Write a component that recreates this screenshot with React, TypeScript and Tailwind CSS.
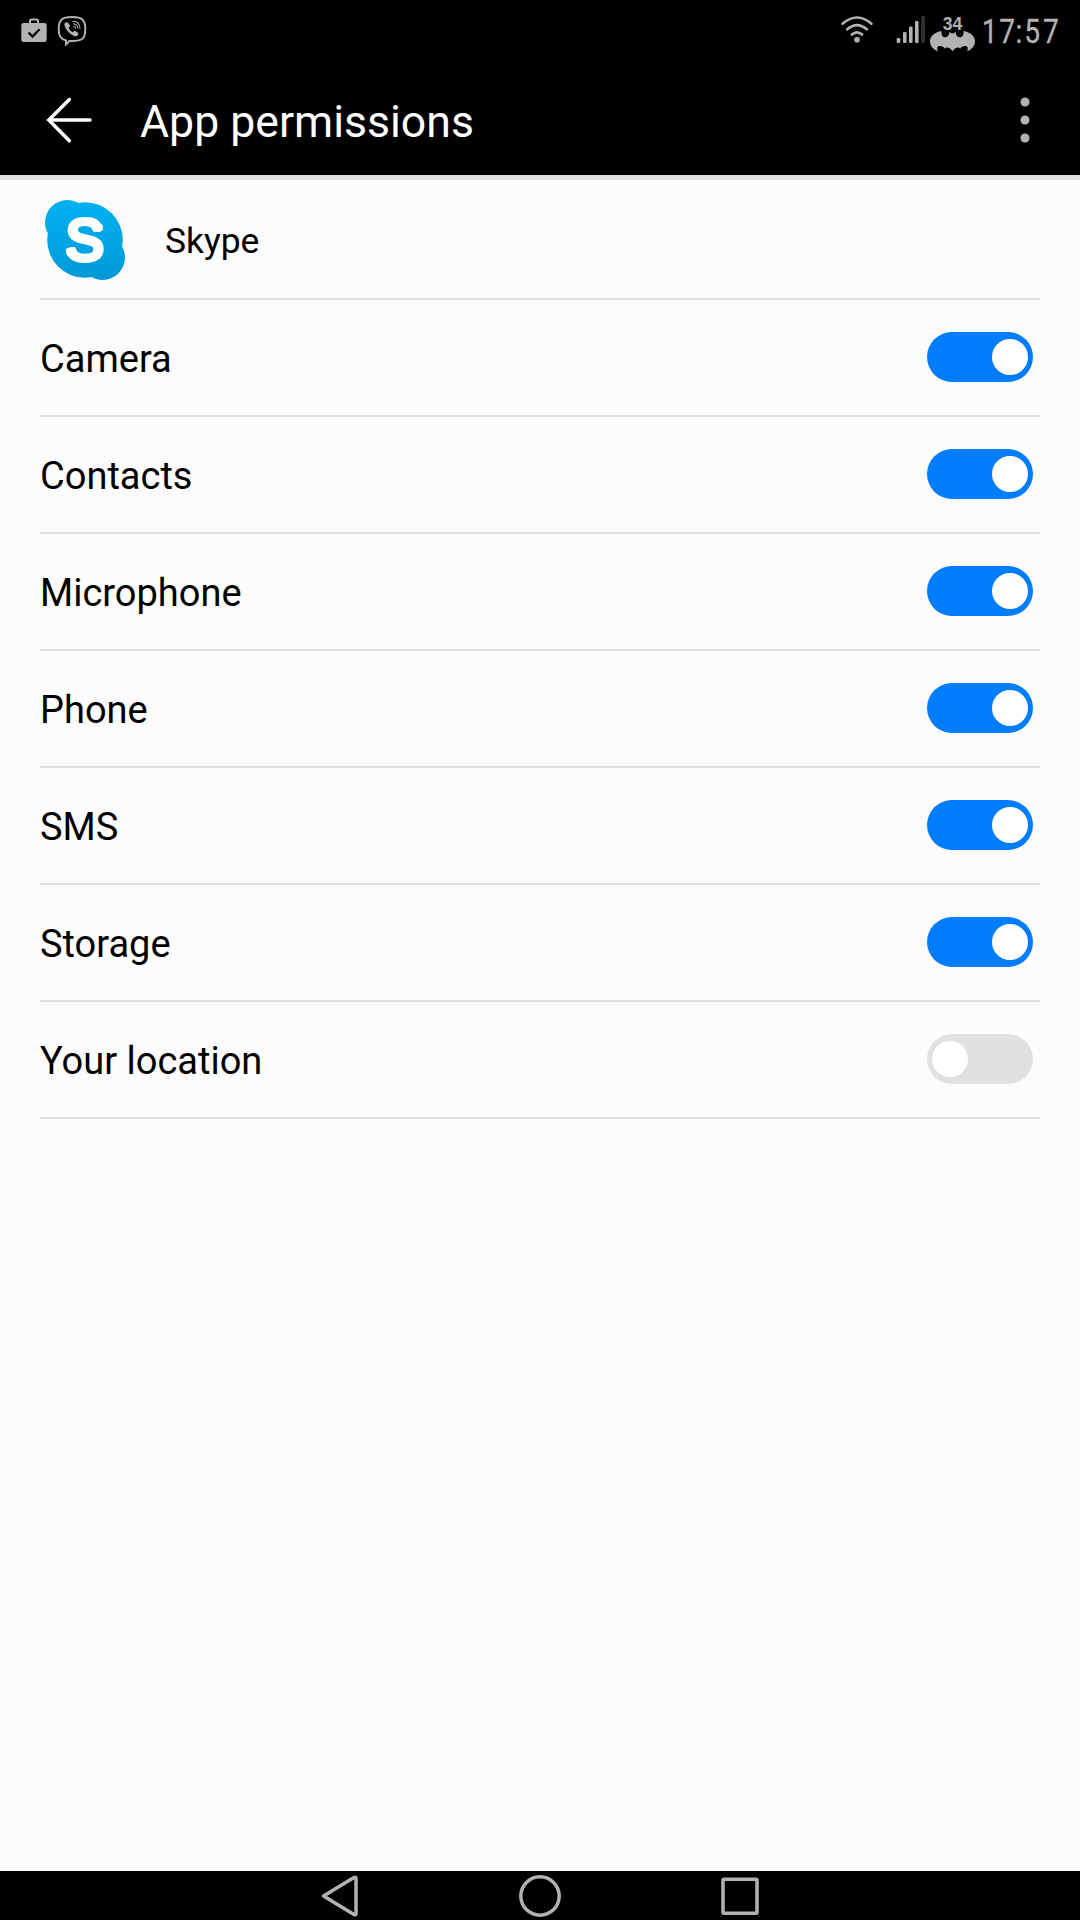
import { useState } from "react";

const permissions = [
  { name: "Camera", granted: true },
  { name: "Contacts", granted: true },
  { name: "Microphone", granted: true },
  { name: "Phone", granted: true },
  { name: "SMS", granted: true },
  { name: "Storage", granted: true },
  { name: "Your location", granted: false },
];

function StatusBar() {
  return (
    <div className="flex h-[60px] items-start justify-between text-[#b2b2b2]">
      <svg width="100" height="60" viewBox="0 0 100 60" fill="none">
        <path d="M30 23v-2.2q0-1.3 1.3-1.3h5.4q1.3 0 1.3 1.3V23" stroke="currentColor" strokeWidth="2" />
        <rect x="21.3" y="23" width="25.4" height="19" rx="2.2" fill="currentColor" />
        <path d="M28.5 32.5l4 4 7-7.3" stroke="#000" strokeWidth="2.3" />
        <path
          d="M72 17c10 0 13.3 2.5 13.3 12.2S82 41 72 41h-2.5L66 44.5V40.5C60.5 39 58.7 36 58.7 29.2 58.7 19.5 62 17 72 17z"
          stroke="currentColor"
          strokeWidth="1.9"
        />
        <path
          d="M66.5 22.3c-1.5 0-2.6 1.6-2 3.2 1.6 4.8 5 8.5 9.8 10.5 1.8.8 3.7-.2 4-1.8.2-.9-.2-1.4-.9-1.9l-2-1.3c-.7-.4-1.3-.2-1.8.5l-.6.7c-2.2-.8-3.6-2.3-4.3-4.5l.8-.7c.7-.6.7-1.1.3-1.8l-1.6-2.3c-.5-.5-1-.7-1.7-.6z"
          fill="currentColor"
        />
        <path
          d="M72.5 21.2c4.7.1 7.5 3 7.5 7.5M73 23.7c3.1.2 4.8 1.9 4.9 4.9M73.3 26.2c1.5.1 2.2.9 2.4 2.3"
          stroke="currentColor"
          strokeWidth="1.1"
        />
      </svg>

      <svg width="240" height="60" viewBox="840 0 240 60" fill="none">
        <g stroke="currentColor" strokeWidth="2.6" strokeLinecap="round">
          <path d="M842.5 23.7q14.5-12.4 29 0" />
          <path d="M847.2 29.3q9.8-8.4 19.6 0" />
          <path d="M851.8 34.5q5.2-4.4 10.4 0" />
        </g>
        <circle cx="857" cy="39.8" r="2.8" fill="currentColor" />
        <g fill="currentColor">
          <rect x="896.7" y="38" width="3.6" height="5" rx="1.2" />
          <rect x="903" y="32" width="3.6" height="11" rx="1.2" />
          <rect x="909" y="26.5" width="3.6" height="16.5" rx="1.2" />
          <rect x="915" y="21" width="3.6" height="22" rx="1.2" />
          <rect x="921.3" y="16" width="3.6" height="27" rx="1.2" fill="#333" />
          <text
            x="942.7"
            y="29.8"
            fontSize="19"
            textLength="19.4"
            lengthAdjust="spacingAndGlyphs"
            className="font-['Liberation_Sans'] font-bold"
          >
            34
          </text>
          <path d="M941.5 31C934.5 32.3 930 36.3 930 41.2c0 4.3 2.6 7.9 7.8 10-1.2-3.4-.3-5.2 2.2-5.2 2.300 0 4 .8 4.800 2.700 1.600-2.300 5.500-1.200 7.700 2.600 2.200-3.800 6.100-4.900 7.700-2.600.8-1.900 2.500-2.700 4.800-2.700 2.500 0 3.400 1.800 2.200 5.200 5.200-2.100 7.800-5.700 7.800-10 0-4.900-4.500-8.900-11.500-10.200.3 4-1 6.300-3.500 6.300-2.500 0-4-1.800-4.500-5.600l-1.700 1.600h-2.600l-1.700-1.600c-.5 3.800-2 5.600-4.500 5.600-2.500 0-3.800-2.300-3.500-6.300z" />
          {/* condensed clock digits */}
          <text
            transform="scale(0.85 1)"
            x="1155 1175.6 1194.7 1205 1227"
            y="43"
            fontSize="33"
            stroke="currentColor"
            strokeWidth="0.3"
            className="font-[Roboto]"
          >
            17:57
          </text>
        </g>
      </svg>
    </div>
  );
}

function SkypeLogo() {
  return (
    <svg width="80" height="80" viewBox="0 0 80 80" className="mt-[2px]">
      <defs>
        <linearGradient id="sky" x1="0" y1="0" x2="0" y2="80" gradientUnits="userSpaceOnUse">
          <stop offset="0.1" stopColor="#00aff0" />
          <stop offset="1" stopColor="#0099d6" />
        </linearGradient>
      </defs>
      <g fill="url(#sky)">
        <circle cx="40" cy="40" r="37.8" />
        <circle cx="22.5" cy="22.5" r="22.5" />
        <circle cx="57.5" cy="57.5" r="22.5" />
      </g>
      <text
        x="39.8"
        y="60"
        fontSize="57"
        textAnchor="middle"
        fill="#fff"
        stroke="#fff"
        strokeWidth="5"
        strokeLinejoin="round"
        className="font-['Liberation_Sans']"
      >
        S
      </text>
      <g fill="#fff">
        <circle cx="53.3" cy="27.5" r="4.6" />
        <circle cx="25.5" cy="52" r="4.6" />
      </g>
    </svg>
  );
}

function Toggle({ on, onClick }: { on: boolean; onClick: () => void }) {
  return (
    <button
      role="switch"
      aria-checked={on}
      onClick={onClick}
      className={`mr-[7px] mb-px flex h-[50px] w-[106px] items-center rounded-full px-[5px] ${
        on ? "justify-end bg-[#007dff]" : "justify-start bg-[#e1e1e1]"
      }`}
    >
      <span className="size-9 rounded-full bg-white" />
    </button>
  );
}

export default function App() {
  const [items, setItems] = useState(permissions);

  const toggle = (name: string) => {
    setItems(items.map((p) => (p.name === name ? { ...p, granted: !p.granted } : p)));
  };

  return (
    <div className="flex h-[1920px] w-[1080px] flex-col bg-[#fcfcfc] font-[Roboto,sans-serif] text-black">
      <header className="h-[180px] border-b-[5px] border-[#e1e1e1] bg-black">
        <StatusBar />
        <div className="flex h-[115px] items-center pr-[47px] pl-[46px] text-white">
          <svg
            width="46"
            height="46"
            viewBox="0 0 46 46"
            fill="none"
            stroke="currentColor"
            strokeWidth="3.5"
            strokeLinecap="round"
            className="mb-[-5px]"
          >
            <path d="M23.3 2.5L2.8 23l20.5 20.8M2.8 23H44" />
          </svg>
          <h1 className="mt-[9px] ml-[48px] flex-1 text-[44.6px] leading-none">App permissions</h1>
          <svg width="16" height="46" viewBox="0 0 16 46" fill="#b2b2b2" className="mb-[-5px]">
            <circle cx="8" cy="5" r="4.5" />
            <circle cx="8" cy="23" r="4.5" />
            <circle cx="8" cy="41" r="4.5" />
          </svg>
        </div>
      </header>

      <main className="flex-1 px-10">
        <div className="flex h-[120px] items-center border-b-2 border-[#e1e1e1] pl-[5px]">
          <SkypeLogo />
          <span className="mt-1.5 ml-10 text-[35.4px] leading-none">Skype</span>
        </div>
        {items.map((p) => (
          <div key={p.name} className="flex h-[117px] items-center justify-between border-b-2 border-[#e1e1e1]">
            <span className="mt-[3px] text-[38px] leading-none">{p.name}</span>
            <Toggle on={p.granted} onClick={() => toggle(p.name)} />
          </div>
        ))}
      </main>

      <nav className="flex h-[49px] justify-center bg-black">
        <svg
          width="440"
          height="49"
          viewBox="320 0 440 49"
          fill="none"
          stroke="#b2b2b2"
          strokeWidth="3.5"
          strokeLinejoin="round"
        >
          <path d="M323.5 25L354 6.5q2-1 2 1V42.5q0 2-2 1z" />
          <circle cx="540" cy="25" r="19.2" />
          <rect x="723" y="8.3" width="34" height="34" rx="1" />
        </svg>
      </nav>
    </div>
  );
}
